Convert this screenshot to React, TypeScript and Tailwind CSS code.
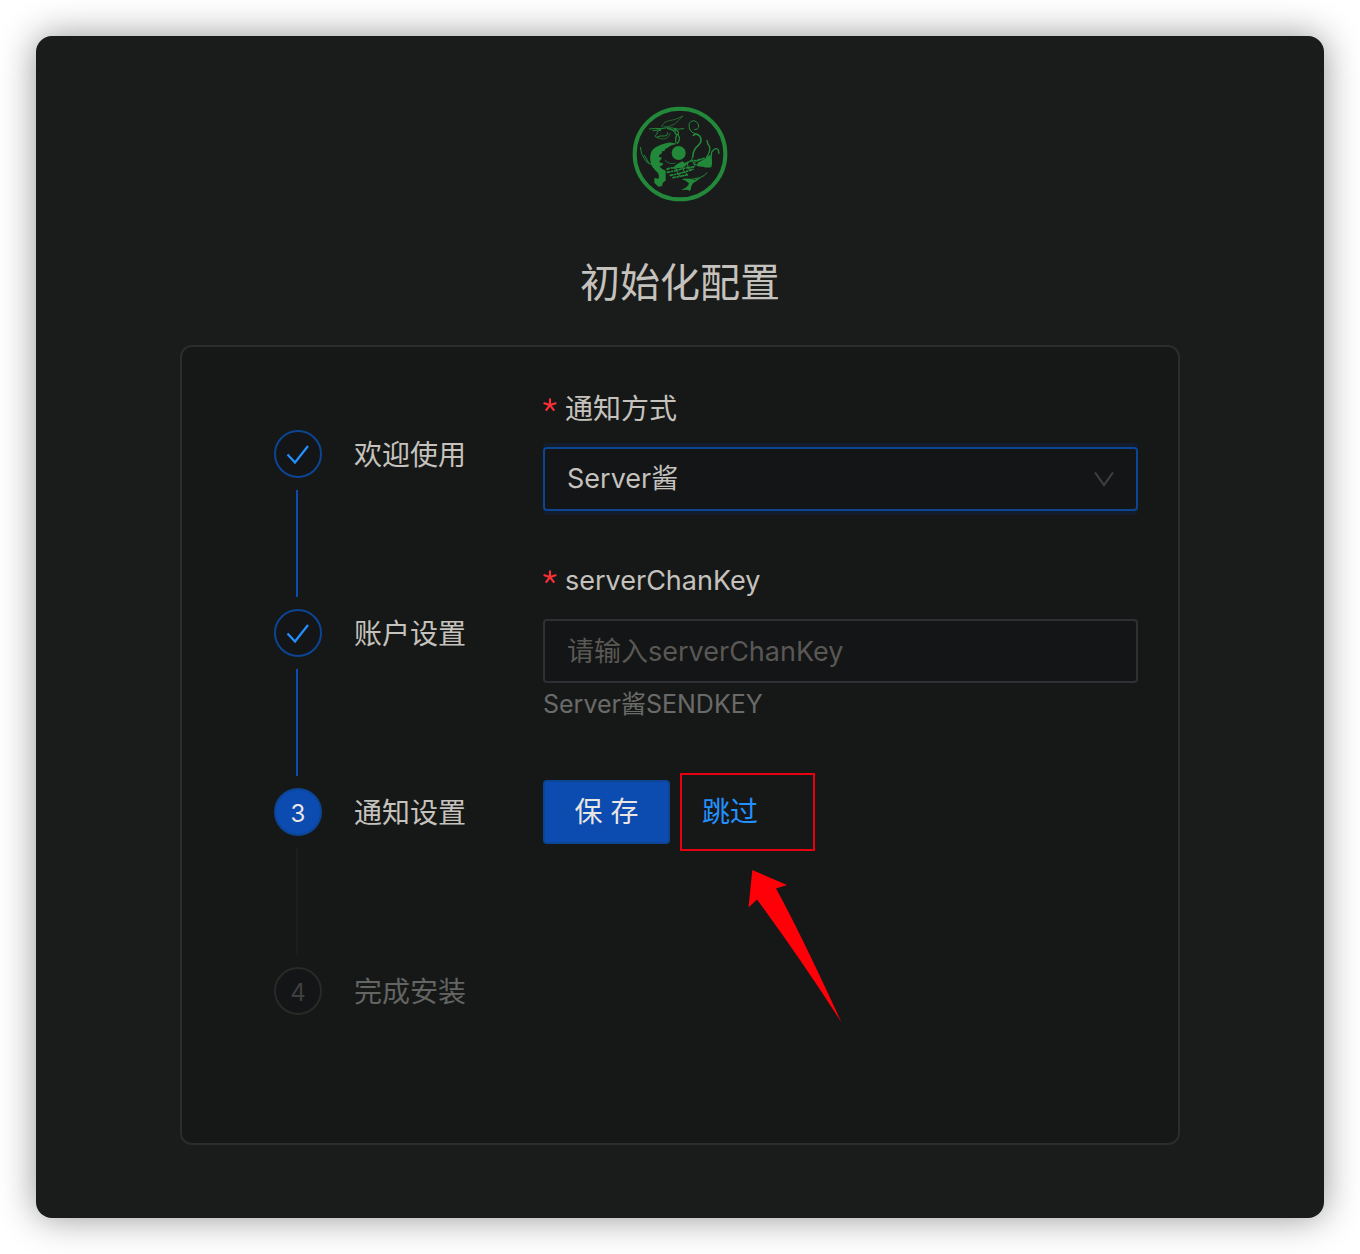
import React from "react";

type StepState = "done" | "active" | "waiting";

const steps: { title: string; state: StepState }[] = [
  { title: "欢迎使用", state: "done" },
  { title: "账户设置", state: "done" },
  { title: "通知设置", state: "active" },
  { title: "完成安装", state: "waiting" },
];

const circleStyles: Record<StepState, string> = {
  done: "border-[#0b4593] bg-[#141516] text-[#2390ff]",
  active: "border-[#0b4593] bg-[#0c4bb0] pt-1 text-[#e8e6e3]",
  waiting: "border-[#2a2928] bg-[#141516] pt-1 text-[#3f3f3f]",
};

function Logo() {
  return (
    <svg
      className="size-24"
      viewBox="21 18 288 288"
      fill="none"
      stroke="#23893a"
      strokeLinecap="round"
      strokeLinejoin="round"
      role="img"
      aria-label="Logo"
    >
      <circle cx="165" cy="162" r="136" strokeWidth="12" />
      <circle cx="161" cy="159" r="21" fill="#23893a" stroke="none" />
      <g strokeWidth="3">
        <path d="M110 81 Q114 66 130 63 Q152 60 174 48 Q160 62 149 72 Q134 82 116 81" strokeWidth="2" />
        <path d="M73 87 Q92 84 108 86 Q124 82 142 84 Q158 90 176 86 M84 92 L106 89" />
        <path d="M108 90 Q92 94 97 101 Q86 108 94 112 Q104 106 118 108 Q130 107 128 98" />
        <path d="M96 113 Q108 119 122 116 Q132 112 136 100" strokeWidth="2" />
        <path d="M128 86 Q142 88 148 94" strokeWidth="4" />
        <path d="M148 88 Q164 92 159 104 Q168 118 157 130 M150 92 Q148 100 156 104 Q150 114 153 128" strokeWidth="4" strokeDasharray="6 3" />
        <path d="M194 88 Q186 64 206 62 Q222 66 221 82 Q218 90 209 89 M194 88 Q198 98 212 102" />
        <path d="M205 106 Q214 98 224 108 Q234 122 220 136 Q204 148 203 172" strokeWidth="5" />
        <path d="M246 121 Q246 132 254 140 Q256 158 244 172 M262 154 Q272 140 280 150 L282 160 M260 156 L258 172" strokeWidth="4" />
        <path d="M120 181 Q130 194 150 190" strokeWidth="2" />
        <path d="M46 142 Q48 164 58 176 Q64 190 80 194 M58 166 L71 187" />
        <path d="M126 208 Q137 202 150 204 L181 191 L199 182 L216 182 L240 174 M127 217 L151 212 L181 204 L210 200 M136 226 L165 220 L199 210 M144 233 L190 224" strokeWidth="5" strokeDasharray="7 6 3 6 10 5" />
        <path d="M151 200 L157 217 L164 228 M168 193 L178 215 L188 224 M187 188 L190 207 L206 208 M200 176 L210 198 M222 176 L206 192 L226 198" strokeWidth="3" />
        <path d="M246 218 Q240 228 224 233 Q204 240 174 238" />
      </g>
      <g fill="#23893a" stroke="none">
        <path d="M122 130 Q138 124 156 132 Q138 134 127 144 L120 147 Q122 154 110 154 Q114 160 104 164 Q98 172 108 172 Q114 176 104 182 Q100 188 112 188 Q118 196 104 198 Q108 208 122 212 L122 242 Q110 248 112 258 L100 260 L88 248 L88 234 L100 236 Q106 222 92 212 Q80 202 77 188 Q72 166 82 150 Q96 136 122 130 Z" />
        <path d="M218 188 Q238 180 256 164 Q265 178 259 202 Q246 204 233 200 L216 198 Z" />
        <path d="M172 237 Q194 234 208 240 L230 232 Q216 243 204 250 Q196 262 198 268 L192 274 L190 269 L168 270 Q190 262 192 250 Q184 242 172 237 Z" />
        <path d="M140 206 Q156 190 172 184 L186 194 L174 203 Z" />
      </g>
    </svg>
  );
}

function CheckMark() {
  return (
    <svg className="size-7" viewBox="0 0 28 28" fill="none" stroke="currentColor" strokeWidth="2.2" aria-hidden="true">
      <path d="M3.5 14.5 L11 22.5 L24 6" />
    </svg>
  );
}

function Steps() {
  return (
    <ol className="w-[361px] shrink-0 pt-[83px] pl-[92px]">
      {steps.map((step, i) => (
        <li key={step.title} className="flex gap-8">
          <div className="flex w-12 flex-col items-center">
            <div
              className={
                "flex size-12 items-center justify-center rounded-full border-2 text-2xl " + circleStyles[step.state]
              }
            >
              {step.state === "done" ? <CheckMark /> : i + 1}
            </div>
            {i < steps.length - 1 && (
              <div
                className={
                  "my-3 mr-[2px] h-[107px] w-[2px] " + (step.state === "done" ? "bg-[#0c4bb0]" : "bg-[#1c1e1d]")
                }
              />
            )}
          </div>
          <span
            className={
              "text-[28px] leading-[50px] " + (step.state === "waiting" ? "text-[#646462]" : "text-[#c5c2bd]")
            }
          >
            {step.title}
          </span>
        </li>
      ))}
    </ol>
  );
}

function RequiredMark() {
  return (
    <svg
      className="mb-2 size-[14px] text-[#fb2f38]"
      viewBox="0 0 14 14"
      fill="none"
      stroke="currentColor"
      strokeWidth="2.2"
      aria-hidden="true"
    >
      <path d="M7 0.5 V7 M0.6 5 L7 7 L13.4 5 M2.8 12.6 L7 7 L11.2 12.6" />
    </svg>
  );
}

function NotifyForm() {
  return (
    <form className="min-w-0 flex-1 pt-10 pr-10" onSubmit={(e) => e.preventDefault()}>
      <label htmlFor="method" className="mb-4 flex h-11 items-center gap-2 text-[28px] text-[#c5c2bd]">
        <RequiredMark />
        通知方式
      </label>
      <div className="relative mb-12">
        <select
          id="method"
          defaultValue="server"
          className="block h-16 w-full appearance-none rounded-[4px] border-2 border-[#0b4593] bg-[#141516] px-[22px] text-[27px] text-[#c5c2bd] shadow-[0_-4px_0_0_#131d2e,0_4px_0_0_#131d2e] outline-none"
        >
          <option value="server">Server酱</option>
        </select>
        <svg
          className="pointer-events-none absolute top-[25px] right-6 h-4 w-5"
          viewBox="0 0 20 16"
          fill="none"
          stroke="#41403e"
          strokeWidth="2"
          aria-hidden="true"
        >
          <path d="M1 0.5 L10 13 L19 0.5" />
        </svg>
      </div>

      <label htmlFor="chan-key" className="mb-4 flex h-11 items-center gap-2 text-[27px] text-[#c5c2bd]">
        <RequiredMark />
        serverChanKey
      </label>
      <input
        id="chan-key"
        type="text"
        placeholder="请输入serverChanKey"
        aria-describedby="chan-key-help"
        className="block h-16 w-full rounded-[4px] border-2 border-[#2e3033] bg-[#141516] px-[22px] text-[27px] text-[#c5c2bd] outline-none placeholder:text-[#5a5854]"
      />
      <p id="chan-key-help" className="text-[25px] leading-[42px] text-[#6a6a68]">
        Server酱SENDKEY
      </p>

      <div className="mt-12 flex items-center gap-[10px]">
        <button
          type="submit"
          className="h-16 w-[127px] rounded-[4px] border-2 border-[#0b4593] bg-[#0c4bb0] text-[28px] text-[#e8e6e3]"
        >
          保 存
        </button>
        <div className="relative border-2 border-[#e60012]">
          <button type="button" className="block h-[74px] w-[131px] pl-5 text-left text-[28px] text-[#2390ff]">
            跳过
          </button>
          <svg
            className="pointer-events-none absolute top-[95px] left-[66px] h-[153px] w-[94px]"
            viewBox="748 870 94 153"
            fill="#ff0008"
            aria-hidden="true"
          >
            <path d="M752.3 870 L787 885 L776 888.5 Q800 932 841.5 1022.5 Q800 958 757 899.5 L748.5 907.5 Z" />
          </svg>
        </div>
      </div>
    </form>
  );
}

export default function App() {
  return (
    <div className="bg-white p-9 font-[Inter,'Noto_Sans_CJK_SC',sans-serif]">
      <main className="flex flex-col items-center rounded-2xl bg-[#1a1c1b] px-6 pt-[70px] pb-[73px] shadow-[0_0_36px_rgba(0,0,0,0.42)]">
        <Logo />
        <h1 className="mt-[51px] mb-8 text-[40px] leading-[60px] text-[#c5c2bd]">初始化配置</h1>
        <section className="flex min-h-[800px] w-full max-w-[1000px] rounded-xl border-2 border-[#2b2c2e] bg-[#161817]">
          <Steps />
          <NotifyForm />
        </section>
      </main>
    </div>
  );
}
